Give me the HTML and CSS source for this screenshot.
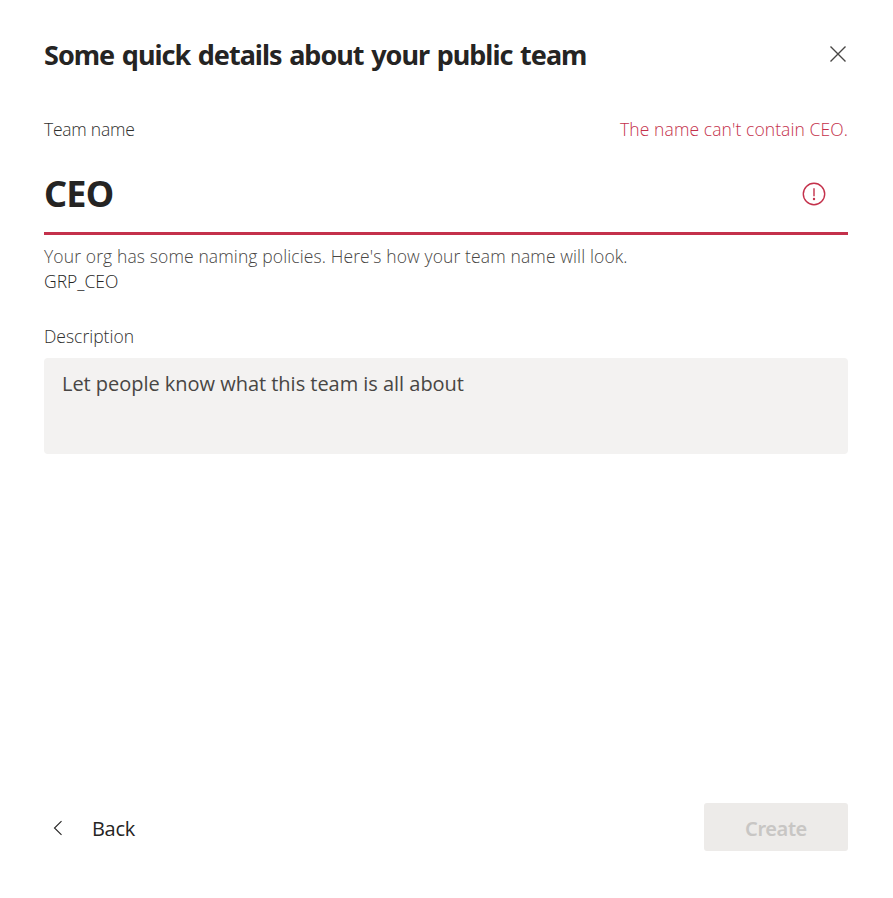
FILE: index.html
```html
<!DOCTYPE html>
<html lang="en">
<head>
<meta charset="utf-8">
<title>Create team</title>
<link rel="stylesheet" href="styles.css">
</head>
<body>
<main class="dialog">
  <header class="header">
    <h1 class="title"><span>Some quick details about your public team</span></h1>
    <button class="close" aria-label="Close"><svg width="18" height="18" viewBox="0 0 18 18"><path d="M1.5 1.5l15 15M16.5 1.5l-15 15"/></svg></button>
  </header>
  <div class="labels">
    <span class="label name-label">Team name</span>
    <span class="error">The name can't contain CEO.</span>
  </div>
  <div class="field">
    <span class="value">CEO</span>
    <svg class="alert" width="24" height="24" viewBox="0 0 24 24"><circle cx="12" cy="12" r="10.7"/><path d="M12 6.2v8"/><circle class="dot" cx="12" cy="17" r="1.2"/></svg>
  </div>
  <p class="hint"><span>Your org has some naming policies. Here's how your team name will look.</span></p>
  <p class="preview"><span>GRP_CEO</span></p>
  <div class="label desc-label"><span>Description</span></div>
  <div class="textarea"><span>Let people know what this team is all about</span></div>
  <footer class="footer">
    <button class="back"><svg width="10" height="16" viewBox="0 0 10 16"><path d="M8.5 1.2L1.5 8l7 6.8"/></svg><span>Back</span></button>
    <button class="create" disabled><span>Create</span></button>
  </footer>
</main>
</body>
</html>
```
FILE: styles.css
```css
* { box-sizing: border-box; }
body { margin: 0; background: #fff; color: #252423; font-family: "Open Sans", "Noto Sans", sans-serif; font-weight: 300; }
button { border: 0; padding: 0; background: none; font: inherit; color: inherit; }
svg { display: block; fill: none; stroke: currentColor; stroke-width: 1.4; }
span { white-space: nowrap; }
.dialog { display: flex; flex-direction: column; height: 898px; padding: 36px 45px 47px 44px; }
.header { display: flex; justify-content: space-between; height: 40px; }
.title { margin: 0; font: 700 27px/38px "Noto Sans", sans-serif; letter-spacing: -1px; word-spacing: 1.6px; }
.close { align-self: flex-start; margin: 9px 1px 0 0; color: #484644; }
.labels { display: flex; justify-content: space-between; height: 28px; margin-top: 39px; font-size: 17.5px; line-height: 28px; }
.label { color: #30302e; }
.name-label { letter-spacing: -0.25px; }
.error { color: #c4314b; letter-spacing: 0.09px; }
.field { display: flex; align-items: center; justify-content: space-between; height: 84px; margin-top: 8px; padding: 4px 22px 0 0; border-bottom: 3px solid #c4314b; }
.value { font: 700 36px/50px "Noto Sans", sans-serif; letter-spacing: -0.8px; }
.alert { color: #c4314b; }
.dot { fill: currentColor; stroke: none; }
.hint, .preview { margin: 0; font-size: 17.5px; line-height: 25px; }
.hint { margin-top: 9px; color: #484644; letter-spacing: 0.12px; }
.desc-label { margin-top: 30px; font-size: 17.5px; line-height: 25px; }
.textarea { height: 96px; margin-top: 9px; padding: 11px 18px; border-radius: 4px; background: #f3f2f1; color: #484644; font-size: 20px; font-weight: 400; line-height: 30px; letter-spacing: -0.03px; }
.footer { display: flex; justify-content: space-between; height: 48px; margin-top: auto; }
.back { display: flex; align-items: center; gap: 29px; padding: 2px 0 0 9px; font-size: 20px; font-weight: 400; letter-spacing: -0.3px; }
.back svg { stroke-width: 1.1; }
.create { width: 144px; padding-top: 3px; border-radius: 3px; background: #edebe9; color: #c8c6c4; font: 600 20px/45px "Noto Sans", sans-serif; letter-spacing: -0.4px; }
```
